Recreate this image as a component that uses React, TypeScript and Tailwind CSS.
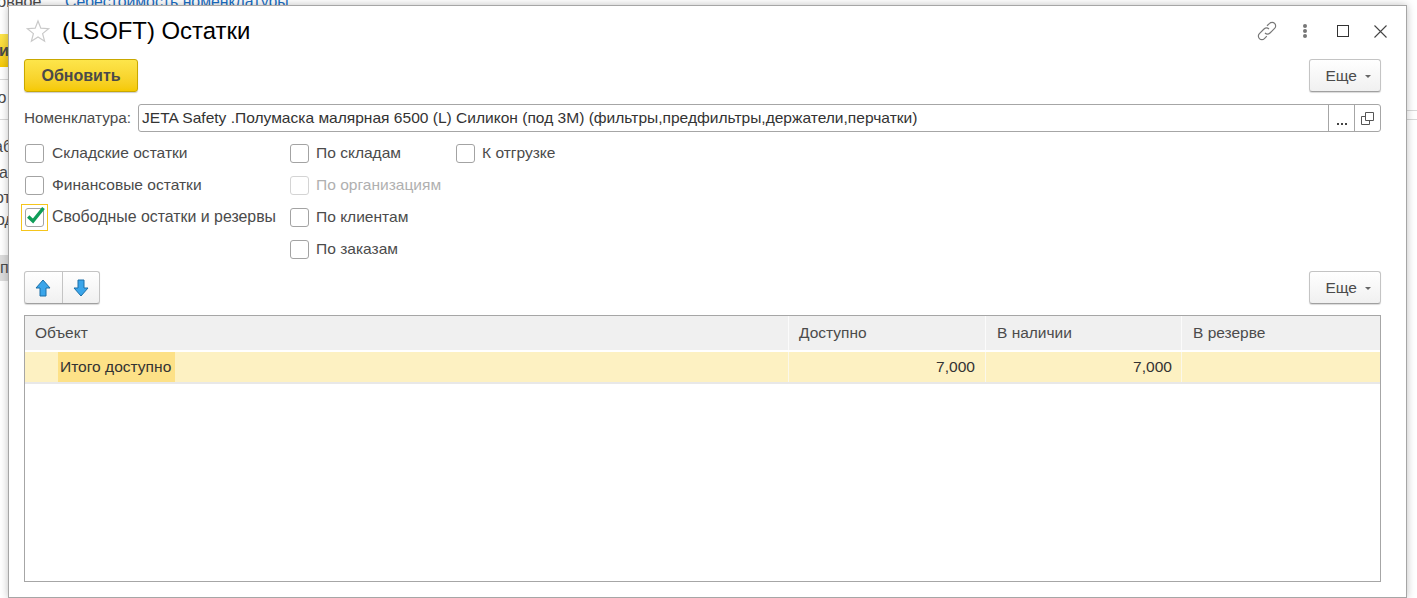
const font = "font-['Liberation_Sans',Arial,sans-serif]";

function Check({ label, checked, disabled, wide }: { label: string; checked?: boolean; disabled?: boolean; wide?: boolean }) {
  return (
    <div className={`flex h-[32px] items-center pl-[1px] ${wide ? "gap-[8px]" : "gap-[7px]"}`}>
      <div className={`relative h-[19px] w-[19px] shrink-0 rounded-[3px] border bg-white ${disabled ? "border-[#d4d4d4]" : "border-[#a3a3a3]"}`}>
        {checked && (
          <>
            <div className="absolute -left-[5px] -top-[5px] h-[27px] w-[27px] border border-[#f5c51c]" />
            <svg className="absolute -left-[1px] -top-[3px]" width="20" height="20" viewBox="0 0 20 20" fill="none">
              <path d="M3.2 10.5 L8 15 L18.5 2" stroke="#0f9d58" strokeWidth="3.4" />
            </svg>
          </>
        )}
      </div>
      <span className={`whitespace-nowrap ${checked ? "text-[15.9px]" : "text-[15.55px]"} ${disabled ? "text-[#b0b0b0]" : "text-[#4b4b4b]"}`}>{label}</span>
    </div>
  );
}

function MoreButton() {
  return (
    <div className="flex h-[33px] w-[72px] items-center justify-end gap-[8px] rounded-[3px] border border-[#c4c4c4] border-b-[#a0a0a0] bg-gradient-to-b from-white to-[#f0f0f0] pr-[9px] text-[15.5px] text-[#4b4b4b] shadow-[0_1px_1px_rgba(0,0,0,0.15)]">
      <span>Еще</span>
      <span className="mt-[1px] h-0 w-0 border-x-[3px] border-t-[3px] border-x-transparent border-t-[#666]" />
    </div>
  );
}

function HeaderCell({ label, className }: { label: string; className: string }) {
  return (
    <div className={`flex h-[34px] items-center border-r border-[#fbfbfb] pb-[1px] text-[15.5px] text-[#4b4b4b] ${className}`}>
      {label}
    </div>
  );
}

export default function App() {
  return (
    <div className={`relative h-[598px] w-[1417px] overflow-hidden bg-white ${font}`}>
      {/* page behind the window */}
      <div className="absolute -left-[32px] top-[-10px] whitespace-nowrap text-[16px] text-[#4b4b4b]">Основное</div>
      <div className="absolute left-[65px] top-[-10px] whitespace-nowrap text-[15.8px] text-[#1b6fc4]">Себестоимость номенклатуры</div>
      <div className="absolute left-0 top-[34px] flex h-[33px] w-[10px] items-center bg-gradient-to-b from-[#fde54a] to-[#f5c900] text-[16px] font-bold text-[#4b4b4b]">
        <span className="-ml-[1px]">и</span>
      </div>
      <div className="absolute left-0 top-[79px] h-px w-[10px] bg-[#d8d8d8]" />
      <div className="absolute -left-[8px] top-[86px] text-[16px] text-[#4b4b4b]">го</div>
      <div className="absolute left-0 top-[119px] h-px w-[10px] bg-[#d8d8d8]" />
      <div className="absolute -left-[6px] top-[135px] text-[16px] text-[#4b4b4b]">аб</div>
      <div className="absolute -left-[1px] top-[161px] text-[16px] text-[#4b4b4b]">ан</div>
      <div className="absolute -left-[5px] top-[186px] text-[16px] text-[#4b4b4b]">от</div>
      <div className="absolute -left-[4px] top-[208px] text-[16px] text-[#4b4b4b]">од</div>
      <div className="absolute left-0 top-[255px] flex h-[26px] w-[10px] items-center bg-[#dcdcdc] text-[16px] text-[#4b4b4b]">п</div>
      <div className="absolute left-[1406px] top-[110px] h-px w-[11px] bg-[#d8d8d8]" />
      <div className="absolute left-[1406px] top-[119px] h-px w-[11px] bg-[#d8d8d8]" />

      {/* window */}
      <div className="absolute left-[8px] top-[5px] flex h-[593px] w-[1399px] flex-col border border-[#a6a6a6] bg-white pl-[15px] pr-[25px] shadow-[0_0_8px_rgba(0,0,0,0.25)]">
        <div className="flex h-[53px] shrink-0 items-center pb-[3px]">
          <svg width="26" height="26" viewBox="0 0 26 26" fill="none" className="ml-[1px]">
            <path d="M13 3 L15.8 10.2 L23.6 10.7 L17.6 15.6 L19.6 23.2 L13 19 L6.4 23.2 L8.4 15.6 L2.4 10.7 L10.2 10.2 Z" stroke="#c9c9c9" strokeWidth="1.2" />
          </svg>
          <div className="ml-[11px] whitespace-nowrap text-[23.9px] text-black">(LSOFT) Остатки</div>
          <div className="-mr-[6px] ml-auto flex items-center">
            <svg width="24" height="24" viewBox="0 0 24 24" fill="none" stroke="#777" strokeWidth="1.2" className="mr-[23px]">
              <path d="M10 14 a3.6 3.6 0 0 0 5 0 l4.6-4.6 a3.5 3.5 0 0 0-5-5 L12 6.8" />
              <path d="M14 10 a3.6 3.6 0 0 0-5 0 l-4.6 4.6 a3.5 3.5 0 0 0 5 5 l2.4-2.4" />
            </svg>
            <svg width="6" height="16" viewBox="0 0 6 16" fill="#777" className="mr-[29px]">
              <circle cx="3" cy="3" r="2" />
              <circle cx="3" cy="8" r="2" />
              <circle cx="3" cy="13" r="2" />
            </svg>
            <div className="mr-[25px] h-[12px] w-[12px] border border-[#333]" />
            <svg width="13" height="13" viewBox="0 0 13 13" stroke="#444" strokeWidth="1.1">
              <path d="M.5 .5 L12.5 12.5 M12.5 .5 L.5 12.5" />
            </svg>
          </div>
        </div>

        <div className="flex h-[33px] shrink-0 items-center justify-between">
          <div className="flex h-[33px] w-[114px] items-center justify-center rounded-[3px] border border-[#c9a800] bg-gradient-to-b from-[#fde54a] to-[#f5c900] text-[16px] font-bold text-[#4a4a4a] shadow-[0_1px_1px_rgba(0,0,0,0.2)]">
            Обновить
          </div>
          <MoreButton />
        </div>

        <div className="mt-[12px] flex h-[28px] shrink-0 items-center">
          <span className="w-[114px] shrink-0 whitespace-nowrap text-[15.3px] text-[#4b4b4b]">Номенклатура:</span>
          <div className="flex h-[28px] flex-1 items-stretch rounded-[3px] border border-[#a6a6a6]">
            <div className="flex flex-1 items-center whitespace-nowrap pl-[3px] text-[15.55px] text-[#333]">
              JETA Safety .Полумаска малярная 6500 (L) Силикон (под 3М) (фильтры,предфильтры,держатели,перчатки)
            </div>
            <div className="flex w-[26px] items-end justify-center border-l border-[#a6a6a6] pb-[6px]">
              <svg width="10" height="2" viewBox="0 0 10 2" fill="#444"><rect width="2" height="2" /><rect x="4" width="2" height="2" /><rect x="8" width="2" height="2" /></svg>
            </div>
            <div className="flex w-[26px] items-center justify-center border-l border-[#a6a6a6]">
              <svg width="13" height="13" viewBox="0 0 13 13" fill="none" stroke="#555"><path d="M4.5 .5h8v8h-8z" /><path d="M4.5 4.5h-4v8h8v-4" /></svg>
            </div>
          </div>
        </div>

        <div className="mt-[5px] flex shrink-0">
          <div className="w-[265px]">
            <Check label="Складские остатки" wide />
            <Check label="Финансовые остатки" wide />
            <Check label="Свободные остатки и резервы" checked wide />
          </div>
          <div className="w-[166px]">
            <Check label="По складам" />
            <Check label="По организациям" disabled />
            <Check label="По клиентам" />
            <Check label="По заказам" />
          </div>
          <div>
            <Check label="К отгрузке" />
          </div>
        </div>

        <div className="mt-[6px] flex h-[33px] shrink-0 items-center justify-between">
          <div className="flex h-[33px] w-[76px] rounded-[3px] border border-[#c4c4c4] border-b-[#a0a0a0] bg-gradient-to-b from-white to-[#f0f0f0] shadow-[0_1px_1px_rgba(0,0,0,0.15)]">
            <div className="flex w-[38px] items-center justify-center border-r border-[#c4c4c4] pr-[1px]">
              <svg width="16" height="18" viewBox="0 0 16 18"><path d="M8 1 L15 9 H11 V17 H5 V9 H1 Z" fill="#3aa5ea" stroke="#1a6fa8" strokeWidth="1" /></svg>
            </div>
            <div className="flex flex-1 items-center justify-center pr-[1px]">
              <svg width="16" height="18" viewBox="0 0 16 18"><path d="M8 17 L15 9 H11 V1 H5 V9 H1 Z" fill="#3aa5ea" stroke="#1a6fa8" strokeWidth="1" /></svg>
            </div>
          </div>
          <MoreButton />
        </div>

        <div className="mb-[15px] mt-[11px] flex-1 border border-[#a6a6a6]">
          <div className="flex bg-[#f0f0f0]">
            <HeaderCell label="Объект" className="w-[764px] pl-[10px]" />
            <HeaderCell label="Доступно" className="w-[197px] pl-[10px]" />
            <HeaderCell label="В наличии" className="w-[196px] pl-[11px]" />
            <HeaderCell label="В резерве" className="flex-1 border-r-0 pl-[11px]" />
          </div>
          <div className="mt-[2px] box-content flex h-[30px] border-b-[2px] border-[#e8e8e8] bg-[#fdf1c2] text-[15.55px] text-[#333]">
            <div className="w-[764px] border-r border-[#fbf8ea] pl-[33px]">
              <div className="flex h-full w-[117px] items-center bg-[#fde187] pl-[2px]">Итого доступно</div>
            </div>
            <div className="flex w-[197px] items-center justify-end border-r border-[#fbf8ea] pr-[10px]">7,000</div>
            <div className="flex w-[196px] items-center justify-end border-r border-[#fbf8ea] pr-[9px]">7,000</div>
            <div className="flex-1" />
          </div>
        </div>
      </div>
    </div>
  );
}
